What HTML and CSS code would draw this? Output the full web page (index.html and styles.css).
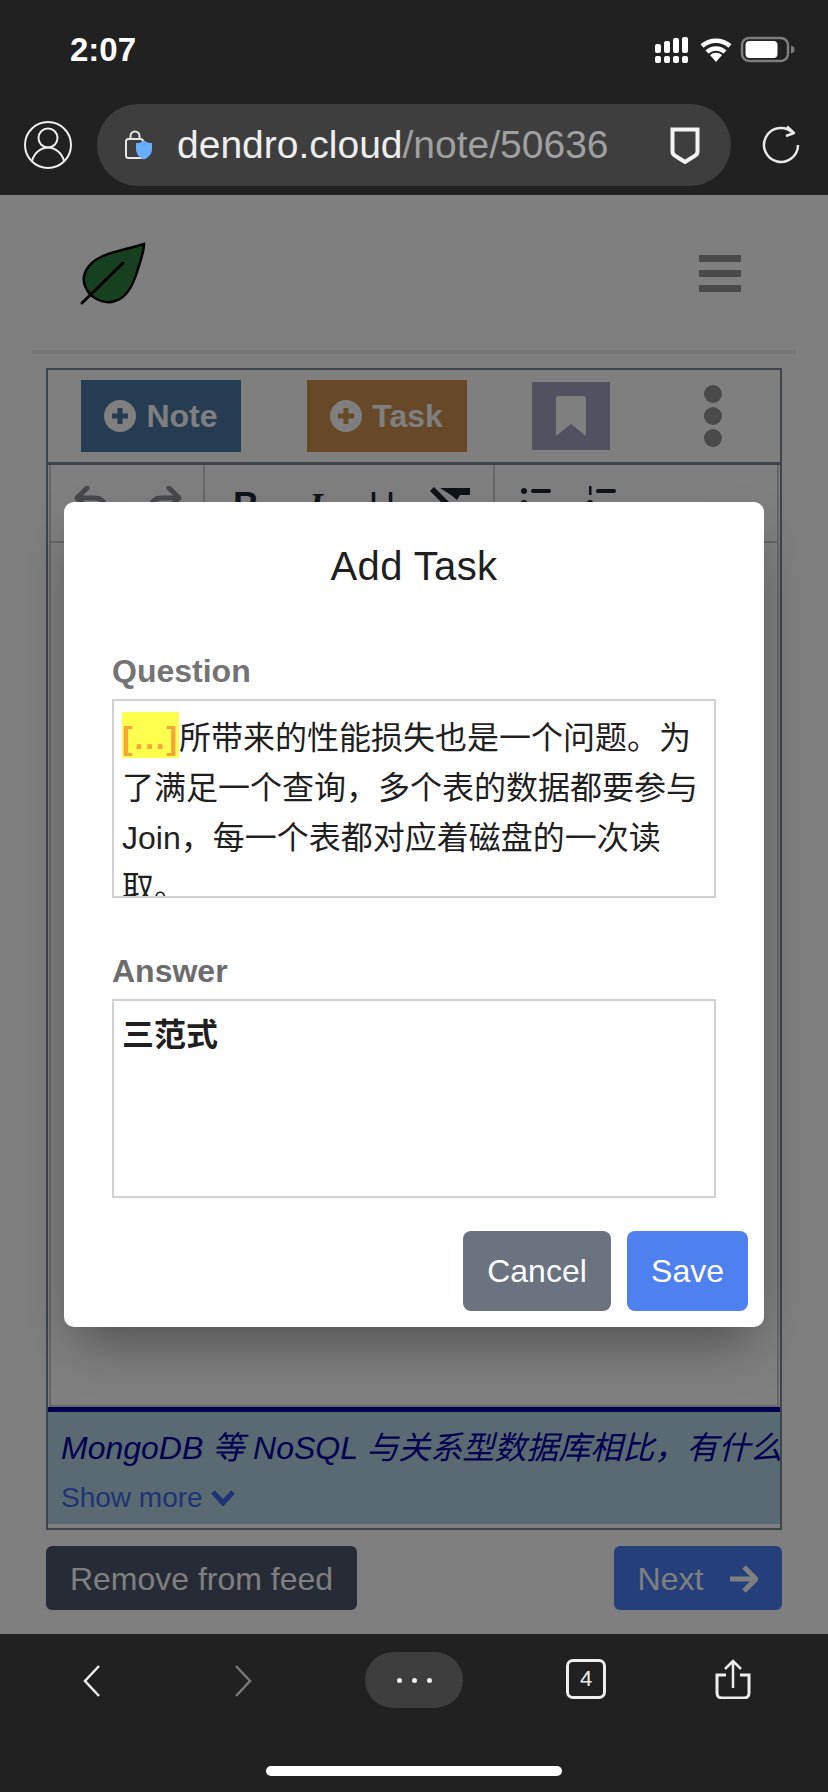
FILE: index.html
```html
<!DOCTYPE html>
<html lang="zh">
<head>
  <title>dendro.cloud</title>
  <link rel="stylesheet" href="styles.css">
</head>
<body>
<div class="screen">
  <div class="topbar">
    <div class="status">
      <span class="time">2:07</span>
      <svg class="status-icons" width="140" height="28" viewBox="655 36 140 28">
        <g fill="#fff">
          <rect x="655" y="44" width="6" height="9" rx="2"/>
          <rect x="664" y="41" width="6" height="12" rx="2"/>
          <rect x="673" y="38" width="6" height="15" rx="2"/>
          <rect x="682" y="37" width="6" height="16" rx="2"/>
          <rect x="655" y="56" width="6" height="7" rx="2"/>
          <rect x="664" y="56" width="6" height="7" rx="2"/>
          <rect x="673" y="56" width="6" height="7" rx="2"/>
          <rect x="682" y="56" width="6" height="7" rx="2"/>
          <path d="M716 62l-6-7a9 9 0 0 1 12 0z"/>
        </g>
        <path d="M702 46a21 21 0 0 1 28 0M707 52a13 13 0 0 1 18 0" fill="none" stroke="#fff" stroke-width="4.500"/>
        <rect x="742" y="38" width="46" height="23" rx="7" fill="none" stroke="#7d7d7d" stroke-width="2.500"/>
        <rect x="745.500" y="41" width="32" height="17" rx="4" fill="#fff"/>
        <path d="M791 45.500c3 1 3.500 2 3.500 4s-.5 3-3.500 4z" fill="#7d7d7d"/>
      </svg>
    </div>
    <div class="urlrow">
      <svg class="avatar" width="48" height="48" viewBox="0 0 48 48" fill="none" stroke="#eee" stroke-width="2">
        <circle cx="24" cy="24" r="23"/>
        <circle cx="24" cy="17" r="9.500"/>
        <path d="M8 40c2-8 9-13.500 16-13.500S38 32 40 40"/>
      </svg>
      <div class="urlbar">
        <svg class="lock" width="28" height="30" viewBox="0 0 28 30">
          <rect x="1" y="9" width="17" height="19" rx="2.500" fill="none" stroke="#e6e6e6" stroke-width="2"/>
          <path d="M5.500 9V6a4.500 4.500 0 0 1 9 0v3" fill="none" stroke="#e6e6e6" stroke-width="2"/>
          <path d="M19 10.500c2.500 2 5 2.500 8 2.500v6c0 5-3.500 8.500-8 10.500-4.500-2-8-5.500-8-10.500v-6c3 0 5.500-.5 8-2.500z" fill="#69aefc"/>
        </svg>
        <span class="url">dendro.cloud<span class="url-path">/note/50636</span></span>
        <svg class="shield" width="30" height="37" viewBox="0 0 30 37">
          <path d="M2.500 2.500h25v22c0 2-1 3.500-3 4.500L15 35l-9.500-6c-2-1-3-2.500-3-4.500z" fill="none" stroke="#f4f4f4" stroke-width="4"/>
        </svg>
      </div>
      <svg class="reload" width="40" height="40" viewBox="0 0 40 40" fill="none" stroke="#e8e8e8" stroke-width="2.500">
        <path d="M31 7A17 17 0 1 0 37 20"/>
        <path d="M26 1.500l7 6.500-8 3" stroke-linejoin="round"/>
      </svg>
    </div>
  </div>

  <div class="webview">
    <div class="nav">
      <svg width="68" height="66" viewBox="80 240 68 66">
        <path d="M145 244C126 250 100 253 90 266C82 276 84 285 90 293C97 301 108 304 116 301C128 298 134 285 138 272C141 262 145 252 145 244Z" fill="#2c803e" stroke="#000" stroke-width="2.500"/>
        <path d="M124 263L83 303" stroke="#000" stroke-width="3" stroke-linecap="round"/>
      </svg>
      <div class="burger"><i></i><i></i><i></i></div>
    </div>
    <div class="rule"></div>

    <div class="card">
      <div class="actions">
        <button class="btn-add btn-note">
          <svg width="32" height="32" viewBox="0 0 32 32"><circle cx="16" cy="16" r="16" fill="#fff"/><path d="M16 8v16M8 16h16" stroke="#4c78a4" stroke-width="5"/></svg>
          Note
        </button>
        <button class="btn-add btn-task">
          <svg width="32" height="32" viewBox="0 0 32 32"><circle cx="16" cy="16" r="16" fill="#fff"/><path d="M16 8v16M8 16h16" stroke="#ce9254" stroke-width="5"/></svg>
          Task
        </button>
        <button class="btn-mark">
          <svg width="30" height="40" viewBox="0 0 30 40"><path d="M0 3a3 3 0 0 1 3-3h24a3 3 0 0 1 3 3v37L15 28 0 40z" fill="#fff"/></svg>
        </button>
        <div class="kebab"><i></i><i></i><i></i></div>
      </div>

      <div class="editor">
        <div class="toolbar">
          <div class="tool-group tg-history">
            <svg class="tool" width="40" height="40" viewBox="0 0 40 40" fill="none" stroke="#8d9199" stroke-width="5" stroke-linecap="round" stroke-linejoin="round">
              <path d="M16 2L6 12l10 10M6 12h18c6 0 10 4 10 10v6"/>
            </svg>
            <svg class="tool" width="40" height="40" viewBox="0 0 40 40" fill="none" stroke="#8d9199" stroke-width="5" stroke-linecap="round" stroke-linejoin="round">
              <path d="M24 2l10 10-10 10M34 12H16C10 12 6 16 6 22v6"/>
            </svg>
          </div>
          <div class="tool-group tg-format">
            <span class="tool glyph glyph-b">B</span>
            <span class="tool glyph glyph-i">I</span>
            <span class="tool glyph glyph-u">U</span>
            <svg class="tool" width="40" height="40" viewBox="0 0 40 40" fill="#1f2937">
              <path d="M10 2h34v7H30l-3 5-6-5zM4 1l30 30-4 4L0 5z"/>
            </svg>
          </div>
          <div class="tool-group tg-list">
            <svg class="tool" width="40" height="40" viewBox="0 0 40 40" fill="#1f2937">
              <circle cx="8" cy="5" r="3"/><rect x="15" y="3" width="20" height="4" rx="2"/><circle cx="8" cy="17" r="3"/>
            </svg>
            <svg class="tool" width="40" height="40" viewBox="0 0 40 40" fill="#1f2937">
              <rect x="7" y="0" width="2.500" height="9"/><rect x="14" y="3" width="20" height="4" rx="2"/><circle cx="8" cy="17" r="3"/>
            </svg>
          </div>
        </div>
      </div>

      <div class="source">
        <div class="source-title">MongoDB 等 NoSQL 与关系型数据库相比，有什么</div>
        <div class="show-more">Show more
          <svg width="24" height="16" viewBox="0 0 24 16" fill="none" stroke="#3d68e8" stroke-width="5"><path d="M2 2l10 11L22 2"/></svg>
        </div>
      </div>
    </div>

    <div class="feed-actions">
      <button class="btn-remove">Remove from feed</button>
      <button class="btn-next">Next
        <svg width="28" height="28" viewBox="0 0 28 28" fill="none" stroke="#fff" stroke-width="5"><path d="M0 14h24M14 2l12 12-12 12"/></svg>
      </button>
    </div>

    <div class="overlay">
      <div class="modal">
        <h2 class="modal-title">Add Task</h2>
        <div class="form">
          <label class="field-label">Question</label>
          <div class="field">
            <span class="cloze">[...]</span>所带来的性能损失也是一个问题。为了满足一个查询，多个表的数据都要参与 Join，每一个表都对应着磁盘的一次读取。
          </div>
          <label class="field-label label-answer">Answer</label>
          <div class="field field-answer">三范式</div>
        </div>
        <div class="modal-foot">
          <button class="btn-cancel">Cancel</button>
          <button class="btn-save">Save</button>
        </div>
      </div>
    </div>
  </div>

  <div class="bottombar">
    <div class="bottom-icons">
      <svg width="18" height="32" viewBox="0 0 18 32" fill="none" stroke="#eee" stroke-width="2.500"><path d="M16 1L2 16l14 15"/></svg>
      <svg width="18" height="32" viewBox="0 0 18 32" fill="none" stroke="#777" stroke-width="2.500"><path d="M2 1l14 15L2 31"/></svg>
      <div class="more-pill"><i></i><i></i><i></i></div>
      <div class="tabs-count">4</div>
      <svg class="share" width="36" height="40" viewBox="0 0 36 40" fill="none" stroke="#eee" stroke-width="2.500">
        <path d="M18 29V2M10 10l8-8 8 8"/>
        <path d="M11 16H2v18c0 3 2 5 5 5h22c3 0 5-2 5-5V16h-9" stroke-width="3"/>
      </svg>
    </div>
    <div class="home-bar"></div>
  </div>
</div>
</body>
</html>
```

FILE: styles.css
```css
*{
  box-sizing:border-box;
}

body{
  margin:0;
  font-family:"Liberation Sans","Noto Sans CJK SC",sans-serif;
  background:#212121;
}

button{
  font:inherit;
  border:0;
  padding:0;
  color:#fff;
}

.screen{
  width:828px;
  height:1792px;
  display:flex;
  flex-direction:column;
  overflow:hidden;
}

/* browser chrome, top */
.topbar{
  height:195px;
  background:#212121;
  flex:none;
}

.status{
  height:104px;
  padding:33px 33px 0 70px;
  display:flex;
  justify-content:space-between;
  align-items:flex-start;
}

.time{
  color:#fff;
  font-size:33px;
  font-weight:bold;
  line-height:34px;
}

.status-icons{
  margin-top:3px;
}

.urlrow{
  display:flex;
  align-items:center;
  height:82px;
  padding-left:24px;
}

.urlbar{
  width:634px;
  height:82px;
  margin-left:25px;
  padding:0 31px 0 28px;
  background:#3e3e3e;
  border-radius:41px;
  display:flex;
  align-items:center;
}

.url{
  margin-left:24px;
  font-size:39px;
  color:#eee;
  white-space:nowrap;
  flex:1;
}

.url-path{
  color:#a0a0a0;
}

.reload{
  margin-left:30px;
}

/* page under the dialog */
.webview{
  position:relative;
  flex:1;
  background:#fff;
  overflow:hidden;
}

.nav{
  height:155px;
  padding:45px 87px 0 79px;
  display:flex;
  justify-content:space-between;
  align-items:flex-start;
}

.burger{
  margin-top:15px;
  width:42px;
}

.burger i{
  display:block;
  height:7px;
  margin-bottom:8px;
  border-radius:1px;
  background:#949494;
}

.rule{
  height:4px;
  margin:0 32px;
  background:#eee;
}

.card{
  margin:14px 46px 0;
  height:1162px;
  border:2px solid #7f8894;
  display:flex;
  flex-direction:column;
}

.actions{
  display:flex;
  align-items:center;
  height:95px;
  padding-left:33px;
  gap:65.5px;
  border-bottom:3px solid #7f8894;
  flex:none;
}

.btn-add{
  width:160px;
  height:72px;
  font-size:32px;
  font-weight:bold;
  display:flex;
  align-items:center;
  justify-content:center;
  gap:10px;
}

.btn-note{
  background:#4c78a4;
}

.btn-task{
  background:#ce9254;
}

.btn-mark{
  width:78px;
  height:68px;
  background:#a4a2be;
  display:flex;
  align-items:center;
  justify-content:center;
}

.kebab{
  margin-left:28px;
}

.kebab i{
  display:block;
  width:18px;
  height:18px;
  margin:4px 0;
  border-radius:50%;
  background:#949494;
}

.editor{
  flex:1;
  margin:0 1px;
  border:2px solid #ccc;
  border-top-width:0;
}

.toolbar{
  display:flex;
  height:78px;
  border-bottom:2px solid #ccc;
}

.tool-group{
  display:flex;
  padding-top:21px;
  border-right:2px solid #ccc;
}

.tg-history{
  width:154px;
  padding-left:20px;
  gap:34px;
}

.tg-format{
  width:290px;
  padding-left:21px;
  gap:28px;
}

.tg-list{
  flex:1;
  padding-left:21px;
  gap:26px;
  border-right:0;
}

.tool{
  width:40px;
  height:40px;
  flex:none;
}

.glyph{
  color:#1f2937;
  font-size:36px;
  line-height:40px;
  text-align:center;
}

.glyph-b{
  font-weight:bold;
}

.glyph-i{
  margin:0 -2px 0 2px;
  font-family:"Liberation Serif",serif;
  font-style:italic;
  font-weight:bold;
}

.source{
  height:117px;
  margin-bottom:4px;
  border-top:5px solid #0000a0;
  background:#b4d4e4;
  padding:16px 0 0 13px;
  flex:none;
  overflow:hidden;
}

.source-title{
  color:#0000a0;
  font-size:32px;
  font-style:italic;
  line-height:40px;
  white-space:nowrap;
}

.show-more{
  margin-top:14px;
  color:#3d68e8;
  font-size:28px;
  line-height:32px;
  display:flex;
  align-items:center;
  gap:8px;
}

.feed-actions{
  display:flex;
  justify-content:space-between;
  margin:16px 46px 0;
}

.btn-remove,
.btn-next{
  height:64px;
  padding-top:2px;
  border-radius:6px;
  font-size:32px;
}

.btn-remove{
  width:311px;
  background:#4c566a;
}

.btn-next{
  width:168px;
  background:#4a7ef4;
  display:flex;
  align-items:center;
  justify-content:center;
  gap:27px;
}

/* dialog */
.overlay{
  position:absolute;
  left:0;
  right:0;
  top:0;
  bottom:0;
  background:rgba(0,0,0,.5);
  display:flex;
  align-items:center;
  justify-content:center;
}

.modal{
  width:700px;
  height:825px;
  background:#fff;
  border-radius:10px;
  box-shadow:0 25px 50px -12px rgba(0,0,0,.38);
}

.modal-title{
  margin:0;
  padding-top:40px;
  font-size:40px;
  font-weight:normal;
  line-height:48px;
  letter-spacing:.4px;
  text-align:center;
  color:#1f1f1f;
}

.form{
  padding:61px 48px 0;
}

.field-label{
  display:block;
  height:48px;
  color:#747474;
  font-size:32px;
  font-weight:bold;
  line-height:40px;
}

.label-answer{
  margin-top:53px;
  color:#6c6c6c;
}

.field{
  height:199px;
  padding:12px 8px 0;
  border:2px solid #d1d1d1;
  color:#1f1f1f;
  font-size:32px;
  line-height:50px;
  overflow:hidden;
}

.cloze{
  padding:8px 0 2px;
  background:#ffff4d;
  color:#f5a53c;
  font-weight:bold;
  letter-spacing:1.8px;
}

.field-answer{
  padding-top:9px;
  font-weight:bold;
}

.modal-foot{
  display:flex;
  justify-content:flex-end;
  gap:16px;
  padding:33px 16px 0 0;
}

.btn-cancel,
.btn-save{
  height:80px;
  border-radius:8px;
  font-size:32px;
}

.btn-cancel{
  width:148px;
  background:#6b7280;
}

.btn-save{
  width:121px;
  background:#4f80ef;
}

/* browser chrome, bottom */
.bottombar{
  height:158px;
  background:#212121;
  flex:none;
}

.bottom-icons{
  height:132px;
  padding:18px 0 0 16px;
  display:grid;
  grid-template-columns:152px 150px 192px 152px 142px;
  justify-items:center;
  align-items:start;
}

.bottom-icons svg{
  margin-top:13px;
}

.bottom-icons .share{
  margin-top:7px;
}

.more-pill{
  width:98px;
  height:56px;
  border-radius:28px;
  background:#3e3e3e;
  display:flex;
  align-items:center;
  justify-content:center;
  gap:10px;
}

.more-pill i{
  width:5px;
  height:5px;
  border-radius:50%;
  background:#eee;
}

.tabs-count{
  width:40px;
  height:40px;
  margin-top:7px;
  border:3px solid #eee;
  border-radius:7px;
  color:#eee;
  font-size:22px;
  line-height:34px;
  text-align:center;
}

.home-bar{
  width:296px;
  height:10px;
  margin:0 auto;
  border-radius:5px;
  background:#fff;
}
```
